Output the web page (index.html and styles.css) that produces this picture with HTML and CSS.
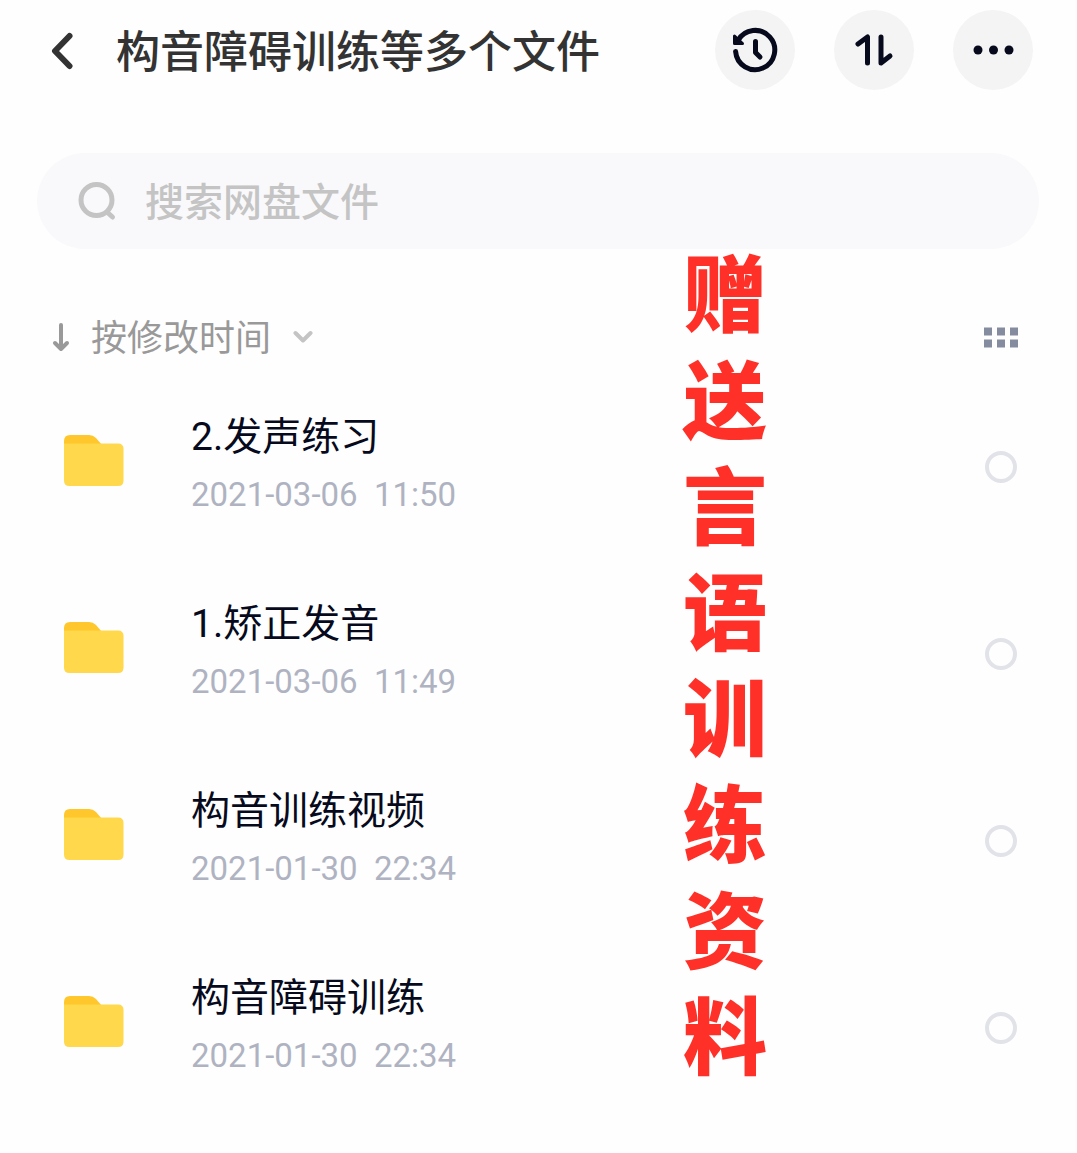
FILE: index.html
```html
<!DOCTYPE html>
<html lang="zh-CN">
<head>
    <meta charset="UTF-8">
    <meta name="viewport" content="width=device-width, initial-scale=1.0">
    <title>构音障碍训练等多个文件</title>
    <link rel="stylesheet" href="styles.css">
</head>

<body>
    <header class="top-bar">
        <button class="back-btn" type="button" aria-label="返回">
            <svg width="24" height="40" viewBox="0 0 24 40"><path d="M19.500 6L5 21L19.500 36"/></svg>
        </button>
        <h1>构音障碍训练等多个文件</h1>
        <div class="actions">
            <button class="round-btn" type="button" aria-label="历史">
                <svg width="80" height="80" viewBox="0 0 80 80">
                    <path d="M23 30.500A19.600 19.600 0 1 1 20.600 41.500"/>
                    <path class="solid" d="M19.500 26V33.500H27.500Z"/>
                    <path d="M40.500 31.500V42.500L45 47"/>
                </svg>
            </button>
            <button class="round-btn" type="button" aria-label="排序">
                <svg width="80" height="80" viewBox="0 0 80 80">
                    <path d="M24 34L33.500 27V53"/>
                    <path d="M47 27V53L56 46"/>
                </svg>
            </button>
            <button class="round-btn" type="button" aria-label="更多">
                <svg width="80" height="80" viewBox="0 0 80 80">
                    <circle class="dot" cx="25" cy="40" r="4.500"/>
                    <circle class="dot" cx="40.500" cy="40" r="4.500"/>
                    <circle class="dot" cx="56" cy="40" r="4.500"/>
                </svg>
            </button>
        </div>
    </header>

    <main>
        <label class="search">
            <svg width="40" height="40" viewBox="0 0 40 40"><circle cx="19.500" cy="19" r="15.500"/><path d="M30.500 31.500L35.500 36"/></svg>
            <input type="search" placeholder="搜索网盘文件" aria-label="搜索网盘文件">
        </label>

        <div class="toolbar">
            <button class="sort-btn" type="button">
                <svg class="arrow" width="20" height="32" viewBox="0 0 20 32"><path d="M10 4V28M4 22L10 28L16 22"/></svg>
                <span>按修改时间</span>
                <svg class="chevron" width="20" height="16" viewBox="0 0 20 16"><path d="M2.500 4L10 11.500L17.500 4"/></svg>
            </button>
            <button class="grid-btn" type="button" aria-label="网格视图">
                <svg width="36" height="24" viewBox="0 0 36 24">
                    <path d="M1 2.500h8v8H1zM14 2.500h8v8h-8zM27 2.500h8v8h-8zM1 14.500h8v8H1zM14 14.500h8v8h-8zM27 14.500h8v8h-8z"/>
                </svg>
            </button>
        </div>

        <ul class="file-list">
            <li>
                <svg class="folder" width="60" height="52" viewBox="0 0 60 52"><path class="tab" d="M6 0H25Q29 0 32 3L38 10V20H0V6Q0 0 6 0Z"/><path class="front" d="M0 8.500H54Q59.500 8.500 59.500 14V45.500Q59.500 51 54 51H5.500Q0 51 0 45.500Z"/></svg>
                <div class="info">
                    <label class="name" for="file1">2.发声练习</label>
                    <p class="date">2021-03-06&nbsp; 11:50</p>
                </div>
                <input type="checkbox" id="file1">
            </li>
            <li>
                <svg class="folder" width="60" height="52" viewBox="0 0 60 52"><path class="tab" d="M6 0H25Q29 0 32 3L38 10V20H0V6Q0 0 6 0Z"/><path class="front" d="M0 8.500H54Q59.500 8.500 59.500 14V45.500Q59.500 51 54 51H5.500Q0 51 0 45.500Z"/></svg>
                <div class="info">
                    <label class="name" for="file2">1.矫正发音</label>
                    <p class="date">2021-03-06&nbsp; 11:49</p>
                </div>
                <input type="checkbox" id="file2">
            </li>
            <li>
                <svg class="folder" width="60" height="52" viewBox="0 0 60 52"><path class="tab" d="M6 0H25Q29 0 32 3L38 10V20H0V6Q0 0 6 0Z"/><path class="front" d="M0 8.500H54Q59.500 8.500 59.500 14V45.500Q59.500 51 54 51H5.500Q0 51 0 45.500Z"/></svg>
                <div class="info">
                    <label class="name" for="file3">构音训练视频</label>
                    <p class="date">2021-01-30&nbsp; 22:34</p>
                </div>
                <input type="checkbox" id="file3">
            </li>
            <li>
                <svg class="folder" width="60" height="52" viewBox="0 0 60 52"><path class="tab" d="M6 0H25Q29 0 32 3L38 10V20H0V6Q0 0 6 0Z"/><path class="front" d="M0 8.500H54Q59.500 8.500 59.500 14V45.500Q59.500 51 54 51H5.500Q0 51 0 45.500Z"/></svg>
                <div class="info">
                    <label class="name" for="file4">构音障碍训练</label>
                    <p class="date">2021-01-30&nbsp; 22:34</p>
                </div>
                <input type="checkbox" id="file4">
            </li>
        </ul>

        <p class="promo">赠送言语训练资料</p>
    </main>
</body>

</html>
```
FILE: styles.css
```css
* {
    box-sizing: border-box;
}

body {
    margin: 0;
    background-color: #fefefe;
    color: #060a1c;
    font-family: Roboto, "Noto Sans CJK SC", sans-serif;
}

button {
    padding: 0;
    border: none;
    background: none;
    color: inherit;
    font: inherit;
    cursor: pointer;
}

svg {
    display: block;
    flex: none;
    fill: none;
    stroke: currentColor;
    stroke-linecap: round;
    stroke-linejoin: round;
}

.top-bar {
    display: flex;
    align-items: center;
    padding: 10px 44px 0 50px;
}

.back-btn {
    color: #333;
    margin-right: 42px;
}

.back-btn svg {
    stroke-width: 6;
}

h1 {
    flex: 1;
    margin: 0;
    padding-top: 6px;
    color: #333;
    font-size: 44px;
    font-weight: 500;
    line-height: 74px;
    white-space: nowrap;
}

.actions {
    display: flex;
    gap: 39px;
}

.round-btn {
    width: 80px;
    height: 80px;
    border-radius: 50%;
    background-color: #f4f4f4;
}

.round-btn svg {
    stroke-width: 5;
}

.round-btn .solid,
.round-btn .dot {
    fill: currentColor;
}

.round-btn .solid {
    stroke-width: 3;
}

.round-btn .dot {
    stroke: none;
}

main {
    position: relative;
    padding: 63px 38px 0 37px;
}

.search {
    display: flex;
    align-items: center;
    gap: 28px;
    height: 96px;
    padding: 0 40px;
    border-radius: 48px;
    background-color: #f9f9fb;
    color: #c4c4c4;
}

.search svg {
    stroke-width: 5;
}

.search input {
    flex: 1;
    min-width: 0;
    padding: 4px 0 0;
    border: none;
    outline: none;
    background: none;
    color: #333;
    font: inherit;
    font-size: 39px;
    font-weight: 500;
}

.search input::placeholder {
    color: #c4c4c4;
}

.toolbar {
    display: flex;
    justify-content: space-between;
    align-items: center;
    margin-top: 60px;
    padding: 0 20px 0 14px;
}

.sort-btn {
    display: flex;
    align-items: center;
    color: #999;
    font-size: 36px;
    line-height: 52px;
}

.sort-btn span {
    padding-top: 4px;
}

.arrow {
    margin-right: 20px;
    stroke-width: 4;
}

.chevron {
    margin-left: 22px;
    color: #c4c4c4;
    stroke-width: 4;
}

.grid-btn svg {
    fill: #858ca0;
    stroke: none;
}

.file-list {
    margin: 8px 0 0;
    padding: 0;
    list-style: none;
}

.file-list li {
    display: flex;
    align-items: center;
    height: 187px;
    padding: 0 22px 0 27px;
}

.folder {
    margin: 0 67px 12px 0;
    stroke: none;
}

.folder .tab {
    fill: #ffc72b;
}

.folder .front {
    fill: #ffd84b;
}

.info {
    flex: 1;
    padding-bottom: 4px;
}

.name {
    display: block;
    font-size: 39px;
    line-height: 60px;
}

.date {
    margin: 0;
    color: #afb3c1;
    font-size: 33px;
    line-height: 56px;
}

.file-list input {
    appearance: none;
    width: 32px;
    height: 32px;
    margin: 0;
    border: 4px solid #e2e3e8;
    border-radius: 50%;
}

.file-list input:checked {
    border-color: #ffd84b;
    background-color: #ffd84b;
}

/* vertical slogan laid over the list */
.promo {
    position: absolute;
    top: 155px;
    right: 310px;
    margin: 0;
    color: #ff3028;
    font-size: 84px;
    font-weight: 900;
    line-height: 106px;
    width: 84px;
    word-break: break-all;
    pointer-events: none;
}
```
